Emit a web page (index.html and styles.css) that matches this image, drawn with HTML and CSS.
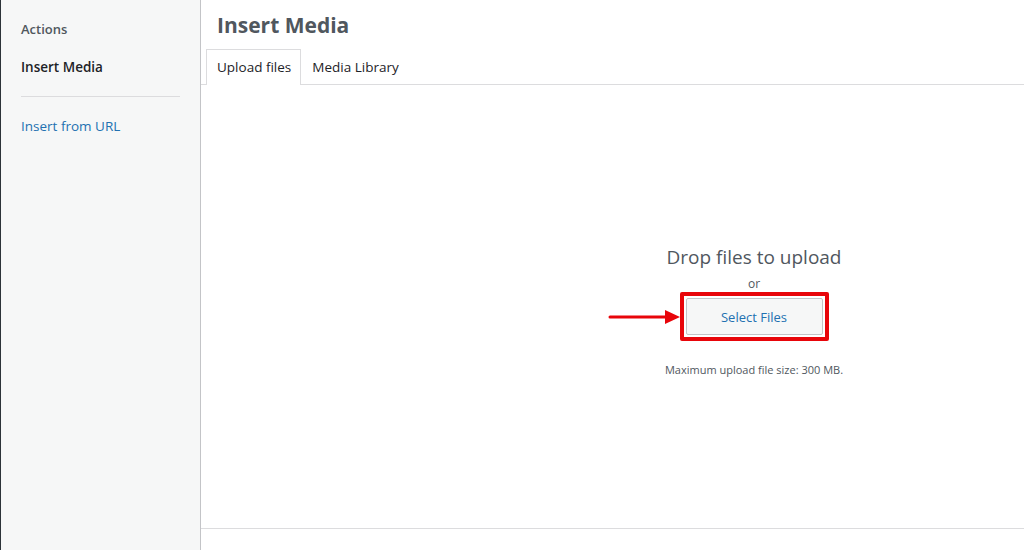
FILE: index.html
```html
<!DOCTYPE html>
<html lang="en">
  <head>
    <meta charset="UTF-8" />
    <title>Insert Media</title>
    <link rel="stylesheet" href="styles.css">
  </head>
  <body>
    <div class="frame">
      <aside class="menu">
        <h3 class="menu-title">Actions</h3>
        <div class="menu-item current">Insert Media</div>
        <div class="menu-sep"></div>
        <a class="menu-item link" href="#">Insert from URL</a>
      </aside>

      <main class="media">
        <h1 class="media-title">Insert Media</h1>
        <nav class="tabs">
          <button class="tab active">Upload files</button>
          <button class="tab">Media Library</button>
        </nav>

        <section class="uploader">
          <div class="drop">
            <p class="drop-text">Drop files to upload</p>
            <p class="drop-or">or</p>
            <div class="pick">
              <svg class="arrow" width="72" height="16" viewBox="0 0 72 16">
                <line x1="2" y1="8" x2="60" y2="8" stroke="#e8050a" stroke-width="3" stroke-linecap="round" />
                <polygon points="57,1 72,8 57,15" fill="#e8050a" />
              </svg>
              <div class="mark">
                <button class="select-btn">Select Files</button>
              </div>
            </div>
            <p class="max-size">Maximum upload file size: 300 MB.</p>
          </div>
        </section>

        <footer class="toolbar"></footer>
      </main>
    </div>
  </body>
</html>
```

FILE: styles.css
```css
body {
  margin: 0;
  font-family: "Open Sans", "Liberation Sans", sans-serif;
  color: #1d2327;
  background-color: #fff;
  overflow: hidden;
}

.frame {
  display: flex;
  height: 550px;
}

/* Left menu */
.menu {
  width: 199px;
  flex-shrink: 0;
  background-color: #f6f7f7;
  border-left: 1px solid #2c3338;
  border-right: 1px solid #c3c4c7;
  padding-top: 19px;
  box-sizing: content-box;
}

.menu-title {
  margin: 0 0 0 20px;
  font-size: 13px;
  font-weight: 600;
  color: #50575e;
  line-height: 20px;
}

.menu-item {
  display: block;
  margin: 18px 0 0 20px;
  font-size: 13.5px;
  line-height: 20px;
}

.menu-item.current {
  font-weight: 600;
  color: #1d2327;
}

.menu-sep {
  height: 1px;
  margin: 19px 20px 0 20px;
  background-color: #dcdcde;
}

.menu-item.link {
  margin-top: 19px;
  color: #2271b1;
  text-decoration: none;
}

/* Main panel */
.media {
  flex: 1;
  display: flex;
  flex-direction: column;
}

.media-title {
  margin: 0;
  padding: 11px 0 0 16px;
  height: 49px;
  box-sizing: border-box;
  font-size: 21px;
  font-weight: 700;
  line-height: 28px;
  color: #50575e;
}

.tabs {
  display: flex;
  padding-left: 5px;
  height: 36px;
  border-bottom: 1px solid #dcdcde;
  box-sizing: border-box;
}

.tab {
  font-family: inherit;
  font-size: 13.5px;
  color: #1d2327;
  background: none;
  border: 1px solid transparent;
  border-bottom: none;
  padding: 0 9px 2px 10px;
  margin-bottom: -1px;
  cursor: pointer;
}

.tab.active {
  background-color: #fff;
  border-color: #dcdcde;
}

.uploader {
  flex: 1;
  border-bottom: 1px solid #dcdcde;
}

.drop {
  display: flex;
  flex-direction: column;
  align-items: center;
  padding: 159px 0 0 283px;
}

.drop p {
  margin: 0;
}

.drop-text {
  font-size: 19px;
  line-height: 26px;
  color: #50575e;
}

.drop-or {
  font-size: 12px;
  line-height: 16px;
  margin-top: 6px !important;
  color: #50575e;
}

.pick {
  position: relative;
}

.arrow {
  position: absolute;
  left: -72px;
  top: 17px;
}

.mark {
  border: 4px solid #e8050a;
  border-radius: 2px;
  padding: 2px;
}

.select-btn {
  display: block;
  width: 137px;
  height: 37px;
  font-family: inherit;
  font-size: 13px;
  color: #2271b1;
  background-color: #f6f7f7;
  border: 1px solid #c3c4c7;
  border-radius: 2px;
  cursor: pointer;
}

.max-size {
  margin-top: 21px !important;
  font-size: 11px;
  line-height: 16px;
  color: #50575e;
}

.toolbar {
  height: 21px;
  flex-shrink: 0;
}
```
